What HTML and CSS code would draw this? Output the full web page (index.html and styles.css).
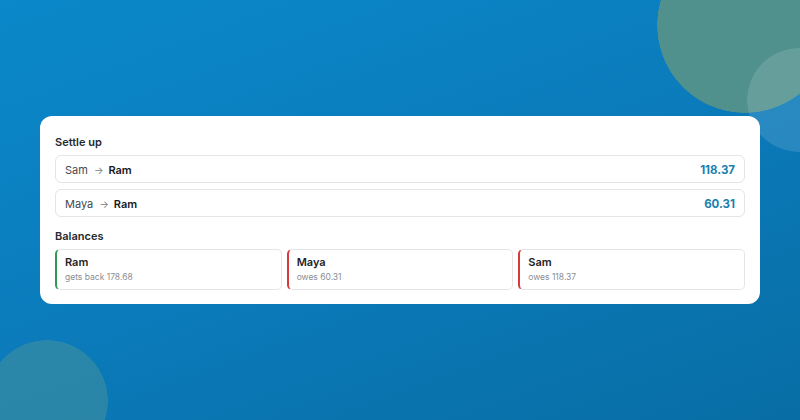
FILE: index.html
```html
<!DOCTYPE html>
<html>
<head>
<meta charset="utf-8">
<link rel="stylesheet" href="styles.css">
</head>
<body>
<main class="stage">
  <section class="card">
    <h2 class="title">Settle up</h2>
    <div class="rows">
      <div class="row">
        <div class="who"><span class="from">Sam</span><span class="arrow">→</span><span class="to">Ram</span></div>
        <div class="amount">118.37</div>
      </div>
      <div class="row">
        <div class="who"><span class="from">Maya</span><span class="arrow">→</span><span class="to">Ram</span></div>
        <div class="amount">60.31</div>
      </div>
    </div>
    <h2 class="title title-bal">Balances</h2>
    <div class="balances">
      <div class="bal bal-pos">
        <div class="bal-name">Ram</div>
        <div class="bal-sub">gets back 178.68</div>
      </div>
      <div class="bal bal-neg">
        <div class="bal-name">Maya</div>
        <div class="bal-sub">owes 60.31</div>
      </div>
      <div class="bal bal-neg">
        <div class="bal-name">Sam</div>
        <div class="bal-sub">owes 118.37</div>
      </div>
    </div>
  </section>
</main>
</body>
</html>
```

FILE: styles.css
```css
* { box-sizing: border-box; }
html, body { margin: 0; padding: 0; }
body {
  width: 800px;
  height: 420px;
  overflow: hidden;
  font-family: Inter, "Noto Sans", sans-serif;
  background:
    radial-gradient(circle 52px at 799px 100px, rgba(255, 255, 255, 0.12) 51.5px, transparent 52px),
    radial-gradient(circle 88px at 745px 25px, #50918d 87.5px, transparent 88px),
    radial-gradient(circle 61px at 47px 401px, rgba(80, 150, 150, 0.45) 60.5px, transparent 61px),
    linear-gradient(160deg, #0a88c9 0%, #0b7bbb 50%, #086da4 100%);
  color: #1f2328;
}
.stage {
  height: 420px;
  display: flex;
  align-items: center;
  padding: 0 40px;
}
.card {
  width: 720px;
  background: #fff;
  border-radius: 12px;
  padding: 18px 15px 14px;
}
.title {
  margin: 0;
  font-size: 11px;
  line-height: 16px;
  font-weight: 600;
  color: #26292e;
}
.rows {
  margin-top: 5px;
  display: flex;
  flex-direction: column;
  gap: 6px;
}
.row {
  height: 28px;
  border: 1px solid #e4e5e8;
  border-radius: 6px;
  padding: 0 9px;
  display: flex;
  align-items: center;
  justify-content: space-between;
  font-size: 11px;
}
.who { display: flex; align-items: center; padding-top: 1px; }
.from { color: #45494f; }
.arrow { color: #7a7f86; font-size: 10px; margin: 0 5px 0 6px; }
.to { font-weight: 600; color: #17191c; }
.amount {
  font-size: 11.5px;
  font-weight: 700;
  color: #1b7fb1;
  padding-top: 1px;
}
.title-bal { margin-top: 11px; }
.balances {
  margin-top: 5px;
  display: grid;
  grid-template-columns: 1fr 1fr 1fr;
  gap: 5px;
}
.bal {
  height: 41px;
  border: 1px solid #e4e5e8;
  border-radius: 5px;
  padding: 5px 8px 0;
}
.bal-pos { border-left: 2px solid #2e9a55; }
.bal-neg { border-left: 2px solid #d63a3a; }
.bal-name {
  font-size: 11px;
  line-height: 15px;
  font-weight: 600;
  color: #1f2226;
}
.bal-sub {
  margin-top: 1px;
  font-size: 8.5px;
  line-height: 12px;
  color: #8a8e94;
}
```
